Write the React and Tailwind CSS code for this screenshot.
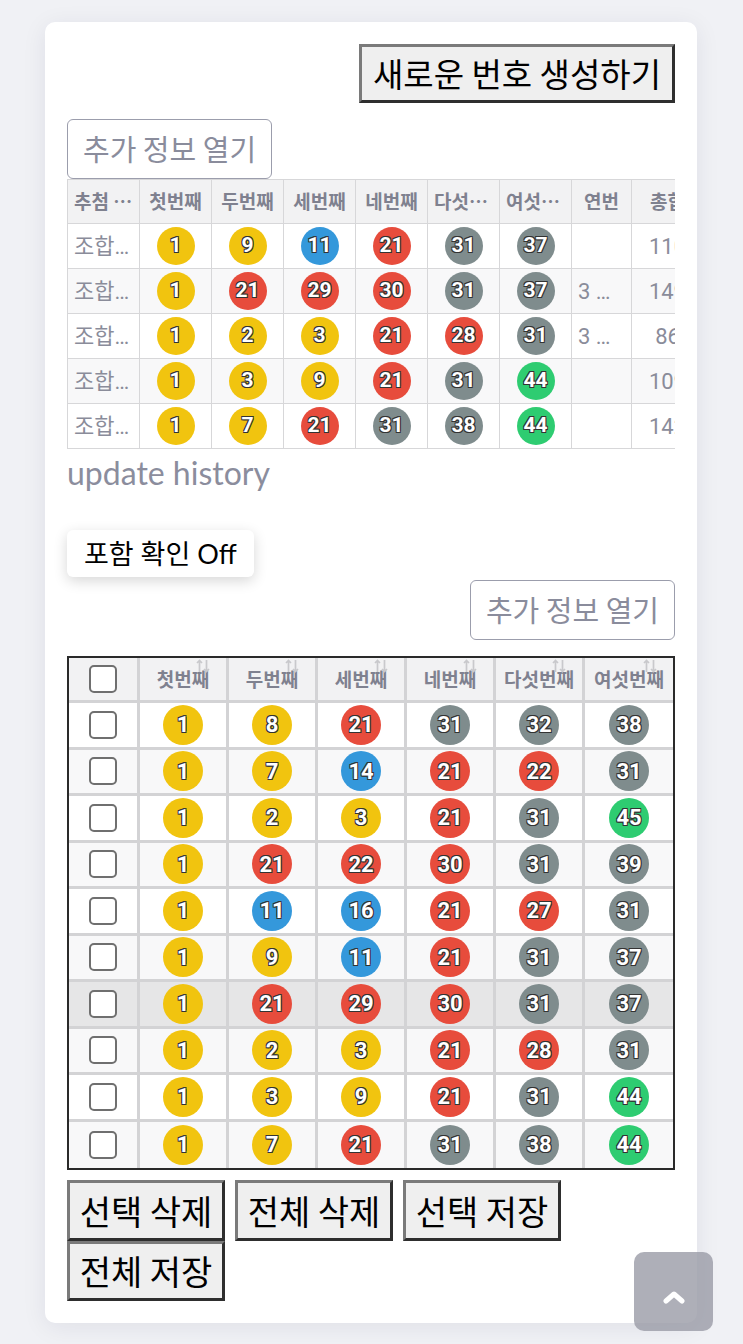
import React from "react";

const history = [
  { nums: [1, 9, 11, 21, 31, 37], run: "" },
  { nums: [1, 21, 29, 30, 31, 37], run: "3 연속" },
  { nums: [1, 2, 3, 21, 28, 31], run: "3 연속" },
  { nums: [1, 3, 9, 21, 31, 44], run: "" },
  { nums: [1, 7, 21, 31, 38, 44], run: "" },
];

const picks = [
  [1, 8, 21, 31, 32, 38],
  [1, 7, 14, 21, 22, 31],
  [1, 2, 3, 21, 31, 45],
  [1, 21, 22, 30, 31, 39],
  [1, 11, 16, 21, 27, 31],
  [1, 9, 11, 21, 31, 37],
  [1, 21, 29, 30, 31, 37],
  [1, 2, 3, 21, 28, 31],
  [1, 3, 9, 21, 31, 44],
  [1, 7, 21, 31, 38, 44],
];

const ballColor = (n) => {
  if (n <= 10) return "bg-[#f1c40f]";
  if (n <= 20) return "bg-[#3498db]";
  if (n <= 30) return "bg-[#e74c3c]";
  if (n <= 40) return "bg-[#7f8c8d]";
  return "bg-[#2ecc71]";
};

const Ball = ({ n, big }) => (
  <span
    className={`inline-flex items-center justify-center rounded-full font-bold text-white font-['Roboto',sans-serif] [text-shadow:-1px_-1px_0_#333,1px_-1px_0_#333,-1px_1px_0_#333,1px_1px_0_#333,0_1px_0_#333,0_-1px_0_#333] ${
      big ? "w-[40px] h-[40px] text-[22px]" : "w-[38px] h-[38px] text-[21px]"
    } ${ballColor(n)}`}
  >
    {n}
  </span>
);

const OldButton = ({ children, className = "" }) => (
  <button
    className={`bg-[#efefef] text-black leading-none font-['Noto_Sans_CJK_KR',sans-serif] border-[3px] border-t-[#7a7a7a] border-l-[#7a7a7a] border-r-[#2e2e2e] border-b-[#2e2e2e] ${className}`}
  >
    {children}
  </button>
);

const SortIcon = () => (
  <svg className="absolute top-[1px] right-[16px]" width="14" height="14" viewBox="0 0 14 14" fill="none" stroke="#c9c9cc" strokeWidth="1.7">
    <path d="M3.5 13V1.5M1 4l2.5-2.5L6 4" />
    <path d="M10.5 1v11.5M8 10l2.5 2.5L13 10" />
  </svg>
);

const Check = () => (
  <span className="inline-block w-[28px] h-[28px] rounded-[5px] border-2 border-[#6f6f6f] bg-white align-middle" />
);

export default function App() {
  const heads1 = ["추첨 번호", "첫번째", "두번째", "세번째", "네번째", "다섯번째", "여섯번째", "연번", "총합"];
  const widths1 = [72, 72, 72, 72, 72, 72, 72, 60, 72];
  const heads2 = ["첫번째", "두번째", "세번째", "네번째", "다섯번째", "여섯번째"];
  const widths2 = [71, 89, 89, 89, 89, 89, 88];

  return (
    <div className="min-h-screen bg-[#f0f1f5] pt-[22px] pb-[23px] font-['Lato','Noto_Sans_CJK_KR',sans-serif]">
      <div className="ml-[45px] w-[652px] bg-white rounded-[10px] shadow-[0_4px_24px_rgba(20,20,60,0.08)] p-[22px]">
        <div className="flex justify-end">
          <OldButton className="h-[59px] px-[11px] text-[33px]">새로운 번호 생성하기</OldButton>
        </div>

        <button className="mt-[16px] h-[60px] px-[15px] border border-[#9b9dac] rounded-[6px] text-[29px] text-[#8a8c9c] font-['Noto_Sans_CJK_KR',sans-serif] bg-white">
          추가 정보 열기
        </button>

        <div className="overflow-hidden">
          <table className="table-fixed border-collapse w-[636px] font-['Roboto','Noto_Sans_CJK_KR',sans-serif]">
            <colgroup>
              {widths1.map((w, i) => (
                <col key={i} style={{ width: w }} />
              ))}
            </colgroup>
            <thead>
              <tr className="bg-[#f2f2f3] h-[44px]">
                {heads1.map((h) => (
                  <th
                    key={h}
                    className="border border-[#d7d7d9] px-[6px] text-[19px] font-bold text-[#7f818f] text-center whitespace-nowrap overflow-hidden text-ellipsis font-['Noto_Sans_CJK_KR',sans-serif]"
                  >
                    {h}
                  </th>
                ))}
              </tr>
            </thead>
            <tbody>
              {history.map((r, i) => (
                <tr key={i} className={`h-[45px] ${i % 2 ? "bg-[#f8f8f9]" : "bg-white"}`}>
                  <td className="border border-[#d7d7d9] px-[6px] text-[22px] text-[#8a8c9a] text-center whitespace-nowrap overflow-hidden text-ellipsis">
                    조합번호 {i + 1}
                  </td>
                  {r.nums.map((n, j) => (
                    <td key={j} className="border border-[#d7d7d9] text-center align-middle p-0">
                      <Ball n={n} />
                    </td>
                  ))}
                  <td className="border border-[#d7d7d9] px-[6px] text-[22px] text-[#8a8c9a] text-center whitespace-nowrap overflow-hidden text-ellipsis">
                    {r.run}
                  </td>
                  <td className="border border-[#d7d7d9] px-[6px] text-[22px] text-[#8a8c9a] text-center whitespace-nowrap">
                    {r.nums.reduce((a, b) => a + b, 0)}
                  </td>
                </tr>
              ))}
            </tbody>
          </table>
        </div>

        <p className="mt-[1px] text-[32px] leading-[45px] text-[#8b8d9d]">update history</p>

        <button className="mt-[35px] h-[47px] px-[17px] bg-white rounded-[6px] shadow-[0_4px_14px_rgba(0,0,0,0.16)] text-[27px] leading-none text-black">
          포함 확인 Off
        </button>

        <div className="flex justify-end mt-[3px]">
          <button className="h-[60px] px-[15px] border border-[#9b9dac] rounded-[6px] text-[29px] text-[#8a8c9c] font-['Noto_Sans_CJK_KR',sans-serif] bg-white">
            추가 정보 열기
          </button>
        </div>

        <div className="mt-[16px] border-2 border-[#2a2a2a]">
          <table className="table-fixed w-full border-separate border-spacing-0 font-['Roboto','Noto_Sans_CJK_KR',sans-serif]">
            <colgroup>
              {widths2.map((w, i) => (
                <col key={i} style={{ width: w }} />
              ))}
            </colgroup>
            <thead>
              <tr className="bg-[#f2f2f3]">
                <th className="h-[45px] border-r-[3px] border-b-[3px] border-[#d3d3d5] text-center">
                  <Check />
                </th>
                {heads2.map((h, i) => (
                  <th
                    key={h}
                    className={`relative h-[45px] border-b-[3px] border-[#d3d3d5] text-[19px] font-bold text-[#7f818f] text-center whitespace-nowrap font-['Noto_Sans_CJK_KR',sans-serif] ${
                      i < heads2.length - 1 ? "border-r-[3px]" : ""
                    }`}
                  >
                    {h}
                    <SortIcon />
                  </th>
                ))}
              </tr>
            </thead>
            <tbody>
              {picks.map((row, i) => {
                const last = i === picks.length - 1;
                const bg = i === 6 ? "bg-[#e6e6e7]" : i % 2 ? "bg-[#f8f8f9]" : "bg-white";
                return (
                  <tr key={i} className={bg}>
                    <td className={`h-[46.5px] border-r-[3px] border-[#d3d3d5] text-center ${last ? "" : "border-b-[3px]"}`}>
                      <Check />
                    </td>
                    {row.map((n, j) => (
                      <td
                        key={j}
                        className={`h-[46.5px] border-[#d3d3d5] text-center align-middle p-0 ${last ? "" : "border-b-[3px]"} ${
                          j < row.length - 1 ? "border-r-[3px]" : ""
                        }`}
                      >
                        <Ball n={n} big />
                      </td>
                    ))}
                  </tr>
                );
              })}
            </tbody>
          </table>
        </div>

        <div className="mt-[10px] flex flex-wrap gap-x-[10px] w-[500px]">
          <OldButton className="h-[61px] w-[158px] text-[34px]">선택 삭제</OldButton>
          <OldButton className="h-[61px] w-[158px] text-[34px]">전체 삭제</OldButton>
          <OldButton className="h-[61px] w-[158px] text-[34px]">선택 저장</OldButton>
          <OldButton className="h-[60px] w-[158px] text-[34px]">전체 저장</OldButton>
        </div>
      </div>

      <button className="fixed right-[30px] bottom-[13px] w-[79px] h-[79px] rounded-[10px] bg-[#9a9ba6]/80 flex items-center justify-center">
        <svg width="22" height="14" viewBox="0 0 22 14" fill="none" stroke="white" strokeWidth="5" strokeLinecap="round" strokeLinejoin="round" className="mt-[10px]">
          <path d="M3 11l8-7 8 7" />
        </svg>
      </button>
    </div>
  );
}
